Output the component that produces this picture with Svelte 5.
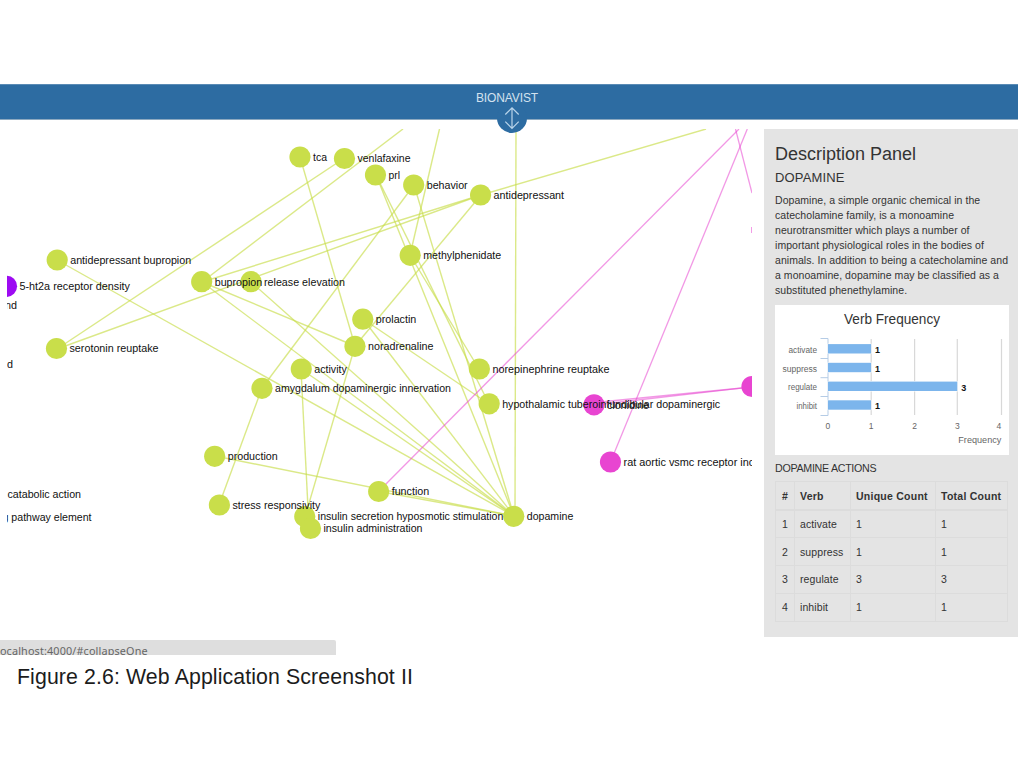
<script>
  const nodes = [
    { x: 300, y: 157, label: 'tca', w: 14 },
    { x: 344.5, y: 158.5, label: 'venlafaxine', w: 53 },
    { x: 375.5, y: 175, label: 'prl', w: 11.5 },
    { x: 413.7, y: 185, label: 'behavior', w: 41 },
    { x: 480.6, y: 195, label: 'antidepressant', w: 70.5 },
    { x: 410.2, y: 255.3, label: 'methylphenidate', w: 78 },
    { x: 57.2, y: 260, label: 'antidepressant bupropion', w: 121 },
    { x: 201.7, y: 281.7, label: 'bupropion', w: 47.5 },
    { x: 251, y: 281.7, label: 'release elevation', w: 81 },
    { x: 6.5, y: 286.3, label: '5-ht2a receptor density', w: 110.5, kind: 'violet' },
    { x: 56.5, y: 348.5, label: 'serotonin reuptake', w: 89 },
    { x: 362.8, y: 319.2, label: 'prolactin', w: 40.5 },
    { x: 355, y: 346.3, label: 'noradrenaline', w: 65.5 },
    { x: 301.3, y: 369, label: 'activity', w: 32.5 },
    { x: 262, y: 388.3, label: 'amygdalum dopaminergic innervation', w: 176 },
    { x: 479.4, y: 369, label: 'norepinephrine reuptake', w: 117 },
    { x: 489.2, y: 403.8, label: 'hypothalamic tuberoinfundibular dopaminergic', w: 218 },
    { x: 594, y: 404.8, label: 'clonidine', w: 42, kind: 'pink' },
    { x: 610.5, y: 462, label: 'rat aortic vsmc receptor increase', w: 158, kind: 'pink' },
    { x: 752, y: 386.5, label: '', w: 0, kind: 'pink' },
    { x: 214.7, y: 456.3, label: 'production', w: 50 },
    { x: 378.7, y: 491.5, label: 'function', w: 37.5 },
    { x: 219.4, y: 505, label: 'stress responsivity', w: 88 },
    { x: 304.8, y: 516.5, label: 'insulin secretion hyposmotic stimulation', w: 185.5 },
    { x: 310.5, y: 528.5, label: 'insulin administration', w: 99 },
    { x: 513.8, y: 516.3, label: 'dopamine', w: 46.5 }
  ];

  const links = [
    [300, 157, 355, 346], [57, 349, 344.5, 158], [202, 282, 403, 129],
    [57, 349, 481, 195], [202, 282, 481, 195], [202, 282, 355, 346],
    [202, 282, 514, 516], [251, 282, 514, 516], [57, 260, 514, 516],
    [301, 369, 514, 516], [301, 369, 309, 528], [355, 346, 305, 517],
    [363, 319, 514, 516], [363, 319, 489, 404], [481, 195, 355, 346],
    [481, 195, 706, 129], [414, 185, 262, 388], [414, 185, 514, 516],
    [262, 388, 219, 505], [376, 175, 514, 516], [376, 175, 489, 404],
    [410, 255, 479, 369], [410, 255, 439.5, 129], [215, 456, 514, 516],
    [379, 491.5, 514, 516], [515, 516, 516, 128]
  ];

  const pinkLinks = [
    [379, 491, 739, 129], [610.5, 462, 747.3, 129], [735.5, 129, 752, 193],
    [594, 405, 752, 386.8], [600, 402, 752, 387], [751.7, 227, 751.7, 233]
  ];

  const fragments = [
    { x: -1, y: 308.5, text: 'and', w: 18 },
    { x: 1, y: 367.5, text: 'nd', w: 12 },
    { x: 7.5, y: 498, text: 'catabolic action', w: 73.5 },
    { x: 2.5, y: 520.5, text: 'g pathway element', w: 89 }
  ];

  const verbs = [
    { name: 'activate', count: 1, y: 349, w: 28.5 },
    { name: 'suppress', count: 1, y: 367.7, w: 34.5 },
    { name: 'regulate', count: 3, y: 386.5, w: 29 },
    { name: 'inhibit', count: 1, y: 405.2, w: 20.5 }
  ];
  const ticks = [827.8, 871.2, 914.6, 957.3, 1001.5];
</script>

<div class="page">
  <header>
    <span class="brand">BIONAVIST</span>
    <span class="handle">
      <svg width="30" height="30" viewBox="0 0 30 30">
        <path d="M15 4.8V25.4M8.3 11.5L15 4.8L21.7 11.5M8.3 18.7L15 25.4L21.7 18.7" fill="none" stroke="#b9d4ea" stroke-width="1.2" />
      </svg>
    </span>
  </header>

  <main>
    <svg class="graph" width="745" height="508" viewBox="7 129 745 508">
      {#each links as [x1, y1, x2, y2]}
        <line {x1} {y1} {x2} {y2} class="link" />
      {/each}
      {#each pinkLinks as [x1, y1, x2, y2]}
        <line {x1} {y1} {x2} {y2} class="link pink" />
      {/each}
      {#each nodes as n}
        <circle cx={n.x} cy={n.y} r="10.6" class={n.kind ?? 'lime'} />
      {/each}
      {#each nodes as n}
        {#if n.label}
          <text x={n.x + 13} y={n.y + 3.9} textLength={n.w} lengthAdjust="spacingAndGlyphs">{n.label}</text>
        {/if}
      {/each}
      {#each fragments as f}
        <text x={f.x} y={f.y} textLength={f.w} lengthAdjust="spacingAndGlyphs">{f.text}</text>
      {/each}
    </svg>

    <aside>
      <h1>Description Panel</h1>
      <h2>DOPAMINE</h2>
      <p>
        Dopamine, a simple organic chemical in the<br />catecholamine family, is a monoamine<br />neurotransmitter which plays a number of<br />important physiological roles in the bodies of<br />animals. In addition to being a catecholamine and<br />a monoamine, dopamine may be classified as a<br />substituted phenethylamine.
      </p>
      <svg class="chart" width="234" height="150" viewBox="775 305 234 150">
        <text class="title" x="844" y="324" textLength="96" lengthAdjust="spacingAndGlyphs">Verb Frequency</text>
        {#each ticks.slice(1) as t}
          <line x1={t} x2={t} y1="339" y2="415" stroke="#d8d8d8" stroke-width="1.2" />
        {/each}
        <path d="M820.5 338.5H828V415.5H820.5M820.5 358.5H828M820.5 377.7H828M820.5 396.5H828" fill="none" stroke="#b5cce6" />
        {#each verbs as v}
          <rect x="828" y={v.y - 4.9} width={v.count * 43.1} height="9.4" fill="#7cb5ec" stroke="#fff" stroke-width="1" paint-order="stroke" />
          <text class="axis" x={817 - v.w} y={v.y + 3.9} textLength={v.w} lengthAdjust="spacingAndGlyphs">{v.name}</text>
          <text class="value" x={832 + v.count * 43.1} y={v.y + 4}>{v.count}</text>
        {/each}
        {#each ticks as t, i}
          <text class="axis" x={i === 4 ? 998.8 : t} y="429.3" text-anchor="middle">{i}</text>
        {/each}
        <text class="axis name" x="958.3" y="443" textLength="43" lengthAdjust="spacingAndGlyphs">Frequency</text>
      </svg>
      <h3>DOPAMINE ACTIONS</h3>
      <table>
        <thead>
          <tr><th>#</th><th>Verb</th><th>Unique Count</th><th>Total Count</th></tr>
        </thead>
        <tbody>
          {#each verbs as v, i}
            <tr><td>{i + 1}</td><td>{v.name}</td><td>{v.count}</td><td>{v.count}</td></tr>
          {/each}
        </tbody>
      </table>
    </aside>
  </main>

  <div class="status"><span>localhost:4000/#collapseOne</span></div>
  <div class="caption">Figure 2.6: Web Application Screenshot II</div>
</div>

<style>
  :global(body) {
    background: #fff;
    overflow: hidden;
  }
  .page {
    box-sizing: border-box;
    width: 1024px;
    height: 768px;
    padding-top: 84px;
    overflow: hidden;
    font-family: 'Liberation Sans', Arial, sans-serif;
    color: #333;
  }
  header {
    position: relative;
    box-sizing: border-box;
    width: 1018px;
    height: 36px;
    padding-top: 5px;
    padding-right: 4px;
    background: #2d6ca2;
    border-top: 1px solid #5a8bb5;
    border-bottom: 1px solid #8da9c0;
    text-align: center;
    line-height: 13px;
  }
  .brand {
    font-size: 12px;
    letter-spacing: -0.12px;
    color: #d3e2ef;
  }
  .handle {
    position: absolute;
    left: 497px;
    top: 18px;
    width: 30px;
    height: 30px;
    border-radius: 50%;
    background: #2d6ca2;
  }
  .handle svg {
    display: block;
  }
  main {
    display: flex;
    height: 520px;
    box-sizing: border-box;
    padding: 9px 0 0 7px;
  }
  .graph {
    flex: none;
    overflow: hidden;
  }
  .graph text {
    font-size: 11px;
    fill: #111;
  }
  .link {
    stroke: #c9de4a;
    stroke-width: 1.4;
    opacity: 0.65;
  }
  .link.pink {
    stroke: #e845d1;
    stroke-width: 1.3;
    opacity: 0.55;
  }
  .lime {
    fill: #c9de4a;
  }
  circle.pink {
    fill: #e845d1;
  }
  .violet {
    fill: #9d0bf2;
  }
  aside {
    box-sizing: border-box;
    width: 254px;
    height: 508px;
    margin-left: 12px;
    padding: 14px 9px 0 11px;
    background: #e4e4e4;
  }
  h1, h2, h3, p {
    margin: 0;
    font-weight: 400;
    white-space: nowrap;
  }
  h1 {
    font-size: 18px;
    line-height: 22px;
    letter-spacing: 0;
  }
  h2 {
    margin-top: 5px;
    font-size: 13px;
    line-height: 16px;
    letter-spacing: 0.15px;
  }
  p {
    margin-top: 7px;
    font-size: 10.5px;
    line-height: 15px;
    letter-spacing: 0.05px;
  }
  .chart {
    display: block;
    margin-top: 7px;
    background: #fff;
  }
  .title {
    font-size: 14px;
    fill: #333;
  }
  .axis {
    font-size: 8.5px;
    fill: #666;
  }
  .axis.name {
    font-size: 9.5px;
  }
  .value {
    font-size: 9px;
    font-weight: 700;
    fill: #111;
  }
  h3 {
    margin-top: 6px;
    font-size: 10.7px;
    line-height: 14px;
    letter-spacing: -0.3px;
  }
  table {
    width: 233px;
    margin-top: 6px;
    border-collapse: collapse;
    table-layout: fixed;
    font-size: 10.5px;
  }
  th, td {
    box-sizing: border-box;
    height: 27.75px;
    padding: 0 0 0 5px;
    border: 1px solid #dcdcdc;
    text-align: left;
    white-space: nowrap;
  }
  th:first-child, td:first-child {
    padding-left: 6px;
  }
  th {
    height: 28.5px;
    border-bottom-width: 2px;
    letter-spacing: 0.25px;
  }
  td {
    letter-spacing: 0.1px;
  }
  th:nth-child(1) { width: 19px; }
  th:nth-child(2) { width: 56px; }
  th:nth-child(3) { width: 85px; }
  .status {
    box-sizing: border-box;
    width: 336px;
    height: 15px;
    border-radius: 0 2px 0 0;
    background: #dedede;
    overflow: hidden;
    color: #666;
    font-family: 'Noto Sans', 'Open Sans', sans-serif;
    font-size: 10.8px;
    line-height: 21px;
    letter-spacing: 0.15px;
  }
  .status span {
    display: block;
    margin-left: -3px;
    white-space: nowrap;
  }
  .caption {
    margin: 9px 0 0 17px;
    font-size: 21.3px;
    line-height: 26px;
    letter-spacing: 0.11px;
    color: #1c1c1c;
    white-space: nowrap;
  }
</style>
